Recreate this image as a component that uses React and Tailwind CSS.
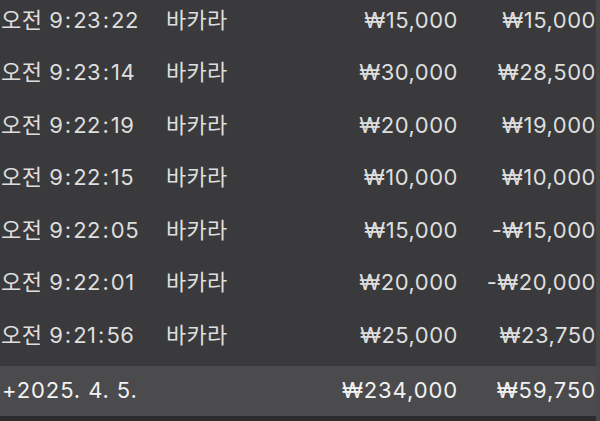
const rows = [
  { time: "오전 9:23:22", game: "바카라", bet: "₩15,000", result: "₩15,000" },
  { time: "오전 9:23:14", game: "바카라", bet: "₩30,000", result: "₩28,500" },
  { time: "오전 9:22:19", game: "바카라", bet: "₩20,000", result: "₩19,000" },
  { time: "오전 9:22:15", game: "바카라", bet: "₩10,000", result: "₩10,000" },
  { time: "오전 9:22:05", game: "바카라", bet: "₩15,000", result: "-₩15,000" },
  { time: "오전 9:22:01", game: "바카라", bet: "₩20,000", result: "-₩20,000" },
  { time: "오전 9:21:56", game: "바카라", bet: "₩25,000", result: "₩23,750" },
];

// SF-style colons sit wider than Inter's, so pad them a little
function Time({ value }) {
  const parts = value.split(":");
  return (
    <>
      {parts.map((part, i) => (
        <span key={i}>
          {i > 0 && <span className="mx-[1.5px]">:</span>}
          {part}
        </span>
      ))}
    </>
  );
}

export default function App() {
  return (
    <div
      className="w-[600px] h-[421px] overflow-hidden bg-[#3a3a3c] flex"
      style={{ fontFamily: 'Inter, "Noto Sans CJK KR", sans-serif' }}
    >
      <div className="flex-1 flex flex-col">
        {/* history rows */}
        <div className="mt-[-6px]">
          {rows.map((row) => (
            <div
              key={row.time}
              className="h-[52.5px] flex items-center text-[22px] text-[#dedede] tracking-[0.5px]"
            >
              <span className="w-[166px] pl-[1px] whitespace-nowrap">
                <Time value={row.time} />
              </span>
              <span className="flex-1 whitespace-nowrap tracking-[0.2px]">{row.game}</span>
              <span className="w-[130px] text-right whitespace-nowrap">{row.bet}</span>
              <span className="w-[138px] text-right whitespace-nowrap">{row.result}</span>
            </div>
          ))}
        </div>

        {/* daily total */}
        <div className="mt-[4px] h-[50px] bg-[#4b4b4d] flex items-center text-[22px] text-[#f2f2f2] tracking-[0.9px]">
          <span className="w-[166px] pl-[2px] whitespace-nowrap">+2025. 4. 5.</span>
          <span className="flex-1" />
          <span className="w-[130px] text-right whitespace-nowrap">₩234,000</span>
          <span className="w-[138px] text-right whitespace-nowrap">₩59,750</span>
        </div>
        <div className="flex-1 bg-[#2c2c2e]" />
      </div>

      {/* scroll edge */}
      <div className="w-[4px] bg-[#48484a]" />
    </div>
  );
}
